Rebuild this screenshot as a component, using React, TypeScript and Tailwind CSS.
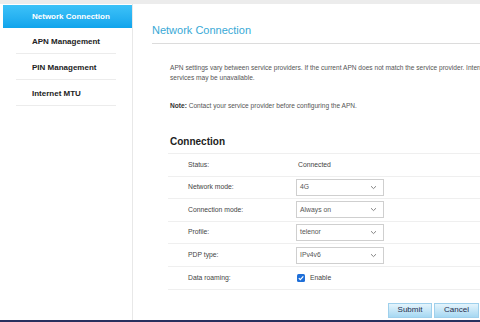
import React from "react";

const menu = ["Network Connection", "APN Management", "PIN Management", "Internet MTU"];

function Chevron() {
  return (
    <svg width="7" height="5" viewBox="0 0 7 5" className="shrink-0">
      <path d="M1 1.2 L3.5 3.6 L6 1.2" fill="none" stroke="#777" strokeWidth="0.9" />
    </svg>
  );
}

function SelectBox({ value }: { value: string }) {
  return (
    <div className="w-[88px] h-[17px] border border-[#cfcfcf] bg-white flex items-center justify-between pl-[3px] pr-[6px] text-[#555]">
      <span>{value}</span>
      <Chevron />
    </div>
  );
}

function Row({ label, children }: { label: string; children: React.ReactNode }) {
  return (
    <div className="h-[22.6px] border-b border-[#efefef] flex items-center">
      <div className="w-[128px] pl-[20px] shrink-0 text-[#444]">{label}</div>
      <div className="flex items-center">{children}</div>
    </div>
  );
}

export default function App() {
  return (
    <div className="w-[480px] h-[322px] overflow-hidden bg-white flex flex-col font-['Liberation_Sans',Arial,sans-serif]">
      <div className="h-[4px] bg-[#ececec] shrink-0" />
      <div className="flex flex-1 min-h-0">
        {/* sidebar */}
        <aside className="w-[133px] shrink-0 border-r border-[#e8e8e8] pt-[1px]">
          <div className="ml-[3px] h-[23px] bg-gradient-to-b from-[#3cc2f8] to-[#0ea4ec] flex items-center pl-[29px] text-white font-bold text-[8px]">
            {menu[0]}
          </div>
          {menu.slice(1).map((m) => (
            <div key={m} className="h-[26px] mx-[16px] border-b border-[#ececec] flex items-center pl-[16px] pt-[3px] font-bold text-[8px] text-[#222]">
              {m}
            </div>
          ))}
        </aside>

        {/* content */}
        <main className="flex-1 min-w-0 pl-[19px] flex flex-col">
          <div className="pt-[19px] pb-[6px] border-b border-[#dcdcdc]">
            <h1 className="text-[11px] leading-[14px] text-[#38a9d6]">Network Connection</h1>
          </div>

          <div className="pl-[18px] text-[6.6px] leading-[10px] text-[#555] whitespace-nowrap">
            <p className="mt-[19px]">
              APN settings vary between service providers. If the current APN does not match the service provider. Internet
              <br />
              services may be unavailable.
            </p>
            <p className="mt-[18px]">
              <b className="text-[#333]">Note:</b> Contact your service provider before configuring the APN.
            </p>
          </div>

          <section className="ml-[16px] mt-[24px] text-[6.8px]">
            <h2 className="pl-[2px] pb-[4px] text-[10px] leading-[14px] font-bold text-[#222] border-b border-[#efefef]">
              Connection
            </h2>
            <Row label="Status:">
              <span className="pl-[2px] text-[#444]">Connected</span>
            </Row>
            <Row label="Network mode:">
              <SelectBox value="4G" />
            </Row>
            <Row label="Connection mode:">
              <SelectBox value="Always on" />
            </Row>
            <Row label="Profile:">
              <SelectBox value="telenor" />
            </Row>
            <Row label="PDP type:">
              <SelectBox value="IPv4v6" />
            </Row>
            <Row label="Data roaming:">
              <div className="flex items-center gap-[5px] pl-[1px]">
                <svg width="8" height="8" viewBox="0 0 8 8">
                  <rect x="0" y="0" width="8" height="8" rx="1.5" fill="#1f6fd8" />
                  <path d="M1.8 4.1 L3.3 5.6 L6.3 2.4" fill="none" stroke="#fff" strokeWidth="1.2" />
                </svg>
                <span className="text-[#444]">Enable</span>
              </div>
            </Row>

            <div className="flex justify-end gap-[2px] mt-[13px] pr-[1px]">
              <button className="w-[44px] h-[15px] border border-[#9fd0ec] bg-gradient-to-b from-[#e4f4fc] to-[#a6d8f2] text-[8px] text-[#1f2b4a]">
                Submit
              </button>
              <button className="w-[45px] h-[15px] border border-[#9fd0ec] bg-gradient-to-b from-[#e4f4fc] to-[#a6d8f2] text-[8px] text-[#1f2b4a]">
                Cancel
              </button>
            </div>
          </section>
        </main>
      </div>
      <div className="h-[2px] shrink-0 bg-[#28305f]" />
    </div>
  );
}
